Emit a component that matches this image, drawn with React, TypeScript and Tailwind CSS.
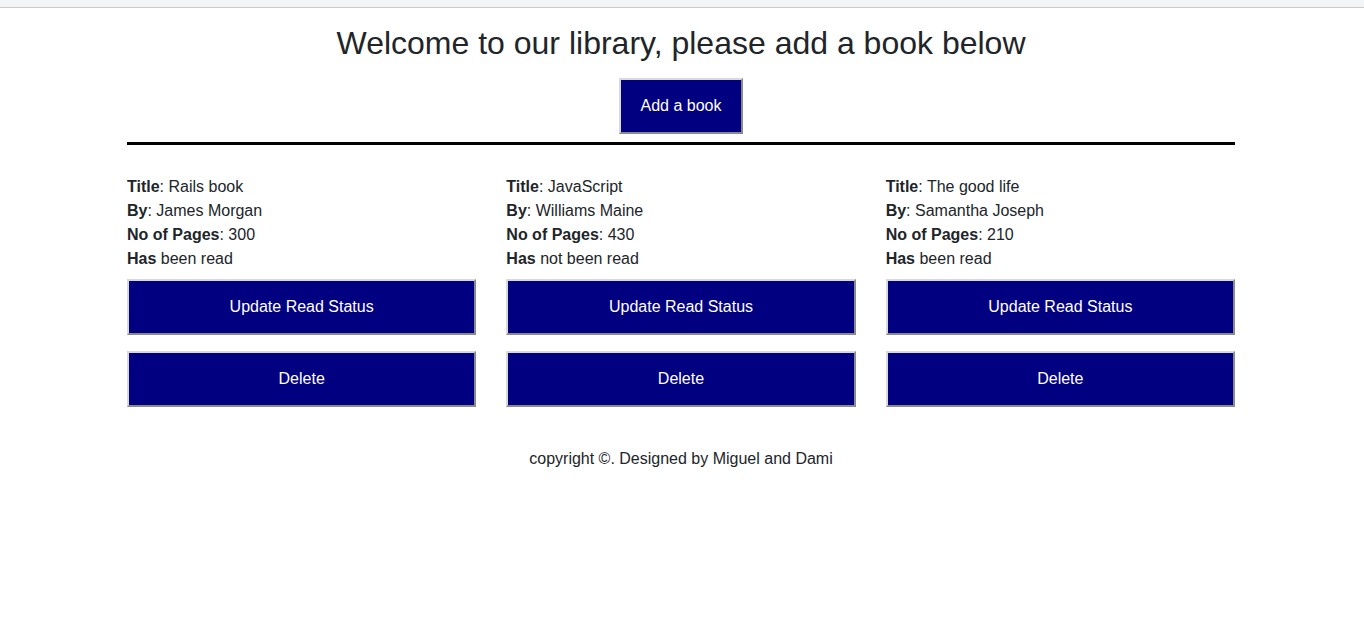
const books = [
  { title: 'Rails book', author: 'James Morgan', pages: 300, read: true },
  { title: 'JavaScript', author: 'Williams Maine', pages: 430, read: false },
  { title: 'The good life', author: 'Samantha Joseph', pages: 210, read: true },
]

const btn =
  'h-[56px] bg-[#000080] text-white text-base border-2 border-solid border-t-[#d9d9d9] border-l-[#d9d9d9] border-b-[#8a8a8a] border-r-[#8a8a8a]'

export default function App() {
  return (
    <div className="min-h-[635px] bg-white text-[#212529] font-['Liberation_Sans',Arial,sans-serif]">
      <div className="h-[8px] bg-[#f3f4f6] border-b border-[#c9cacc]" />

      <div className="ml-[127px] w-[1108px]">
        <h1 className="mt-[16px] text-center text-[32px] leading-[38px]">
          Welcome to our library, please add a book below
        </h1>

        <div className="mt-[16px] flex justify-center">
          <button className={`${btn} w-[124px]`}>Add a book</button>
        </div>

        <hr className="mt-[8px] border-0 h-[3px] bg-black" />

        <div className="mt-[30px] grid grid-cols-3 gap-x-[30px]">
          {books.map((b) => (
            <div key={b.title} className="flex flex-col">
              <div className="text-base leading-6">
                <p><b>Title</b>: {b.title}</p>
                <p><b>By</b>: {b.author}</p>
                <p><b>No of Pages</b>: {b.pages}</p>
                <p><b>Has</b> {b.read ? 'been read' : 'not been read'}</p>
              </div>
              <button className={`${btn} w-full mt-[8px]`}>Update Read Status</button>
              <button className={`${btn} w-full mt-[16px]`}>Delete</button>
            </div>
          ))}
        </div>

        <footer className="mt-[40px] text-center text-base leading-6">
          copyright ©. Designed by Miguel and Dami
        </footer>
      </div>
    </div>
  )
}
